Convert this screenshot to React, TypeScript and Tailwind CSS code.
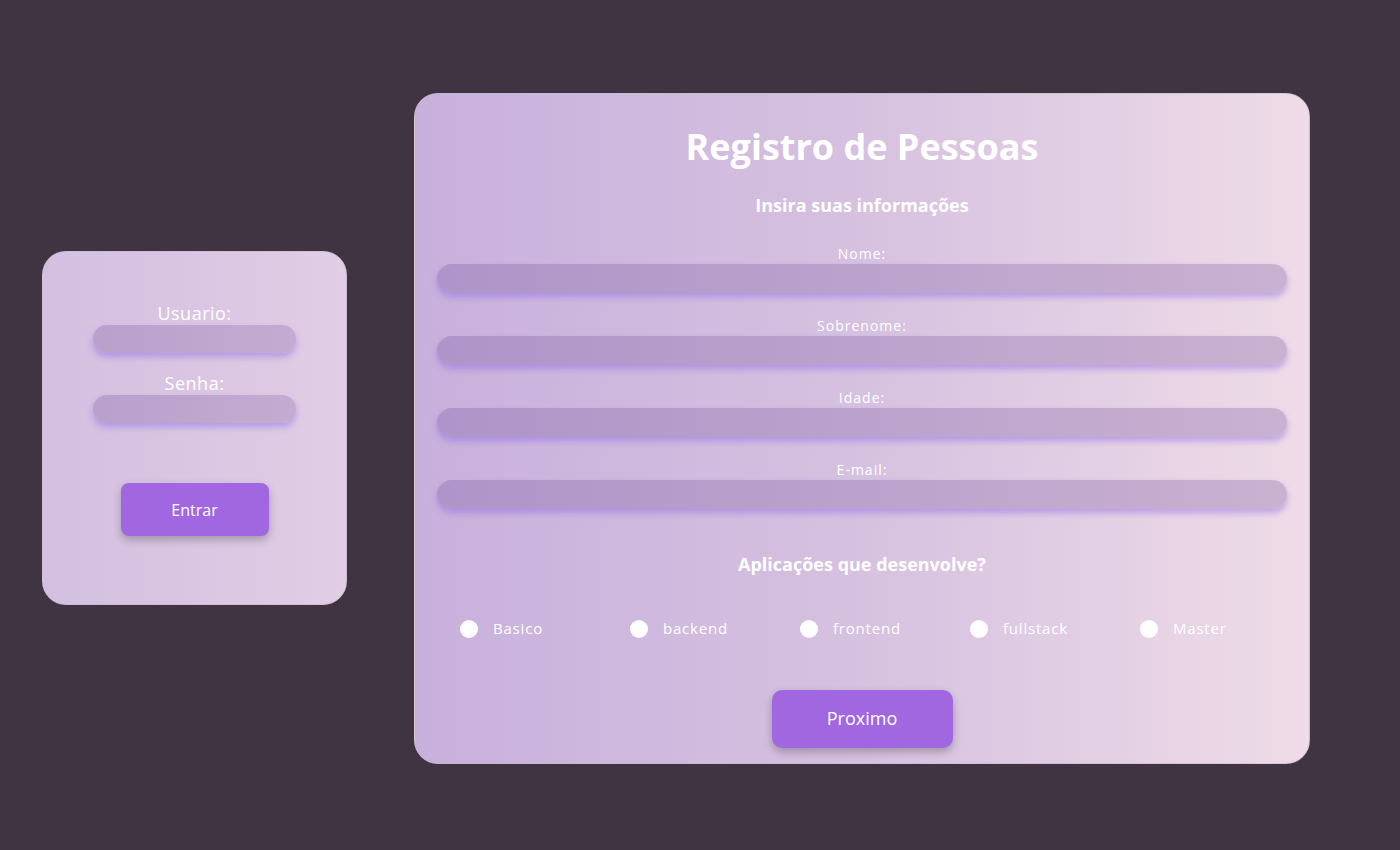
import React from "react";

const fields = ["Nome:", "Sobrenome:", "Idade:", "E-mail:"];
const levels = ["Basico", "backend", "frontend", "fullstack", "Master"];

const inputCls =
  "block rounded-full shadow-[0_4px_6px_rgba(140,110,235,0.5)] outline-none";

const LoginCard = () => (
  <div className="w-[305px] h-[354px] rounded-[24px] border border-[#c9b6cf]/60 bg-gradient-to-r from-[#d3bfe0] to-[#e1cde4] flex flex-col items-center pt-[49px]">
    <label className="text-[18px] leading-6 tracking-[0.5px] text-white">Usuario:</label>
    <input className={`${inputCls} w-[203px] h-[28px] bg-gradient-to-r from-[#b8a0cb] to-[#c3abd1]`} />
    <label className="mt-[18px] text-[18px] leading-6 tracking-[0.5px] text-white">Senha:</label>
    <input type="password" className={`${inputCls} w-[203px] h-[28px] bg-gradient-to-r from-[#b8a0cb] to-[#c3abd1]`} />
    <button className="mt-[60px] w-[148px] h-[53px] rounded-lg bg-[#a067e0] text-white text-[16px] shadow-[0_4px_8px_rgba(0,0,0,0.25)]">
      Entrar
    </button>
  </div>
);

const RegisterCard = () => (
  <div className="w-[896px] rounded-[24px] border border-[#c9b6cf]/60 bg-gradient-to-r from-[#c8b0dc] via-[#d6c1e0] to-[#efdce7] px-[22px] pt-[29px] pb-[15px] flex flex-col items-center">
    <h1 className="text-[36px] leading-[48px] font-bold text-white">Registro de Pessoas</h1>
    <h2 className="mt-[22px] text-[18px] leading-6 font-bold text-white">Insira suas informações</h2>
    <div className="mt-[27px] w-full flex flex-col gap-[23px]">
      {fields.map((f) => (
        <div key={f} className="flex flex-col items-center">
          <label className="text-[14px] leading-5 tracking-[1px] text-white">{f}</label>
          <input className={`${inputCls} w-full h-[29px] bg-gradient-to-r from-[#ae94c8] via-[#bba2cc] to-[#c9b1d1]`} />
        </div>
      ))}
    </div>
    <h2 className="mt-[43px] text-[18px] leading-6 font-bold text-white">Aplicações que desenvolve?</h2>
    <div className="mt-[41px] w-full grid grid-cols-5">
      {levels.map((l) => (
        <label key={l} className="flex items-center h-6 pl-[23px] gap-[15px]">
          <span className="w-[18px] h-[18px] rounded-full bg-white" />
          <span className="text-[15px] tracking-[0.8px] text-white">{l}</span>
        </label>
      ))}
    </div>
    <button className="mt-[49px] w-[181px] h-[58px] shrink-0 rounded-[10px] bg-[#a067e0] text-white text-[18px] shadow-[0_4px_8px_rgba(0,0,0,0.25)]">
      Proximo
    </button>
  </div>
);

export default function App() {
  return (
    <div className="w-full h-[850px] bg-[#413442] flex items-center pl-[42px] pt-[6px] gap-[67px] font-['Open_Sans',sans-serif]">
      <LoginCard />
      <RegisterCard />
    </div>
  );
}
